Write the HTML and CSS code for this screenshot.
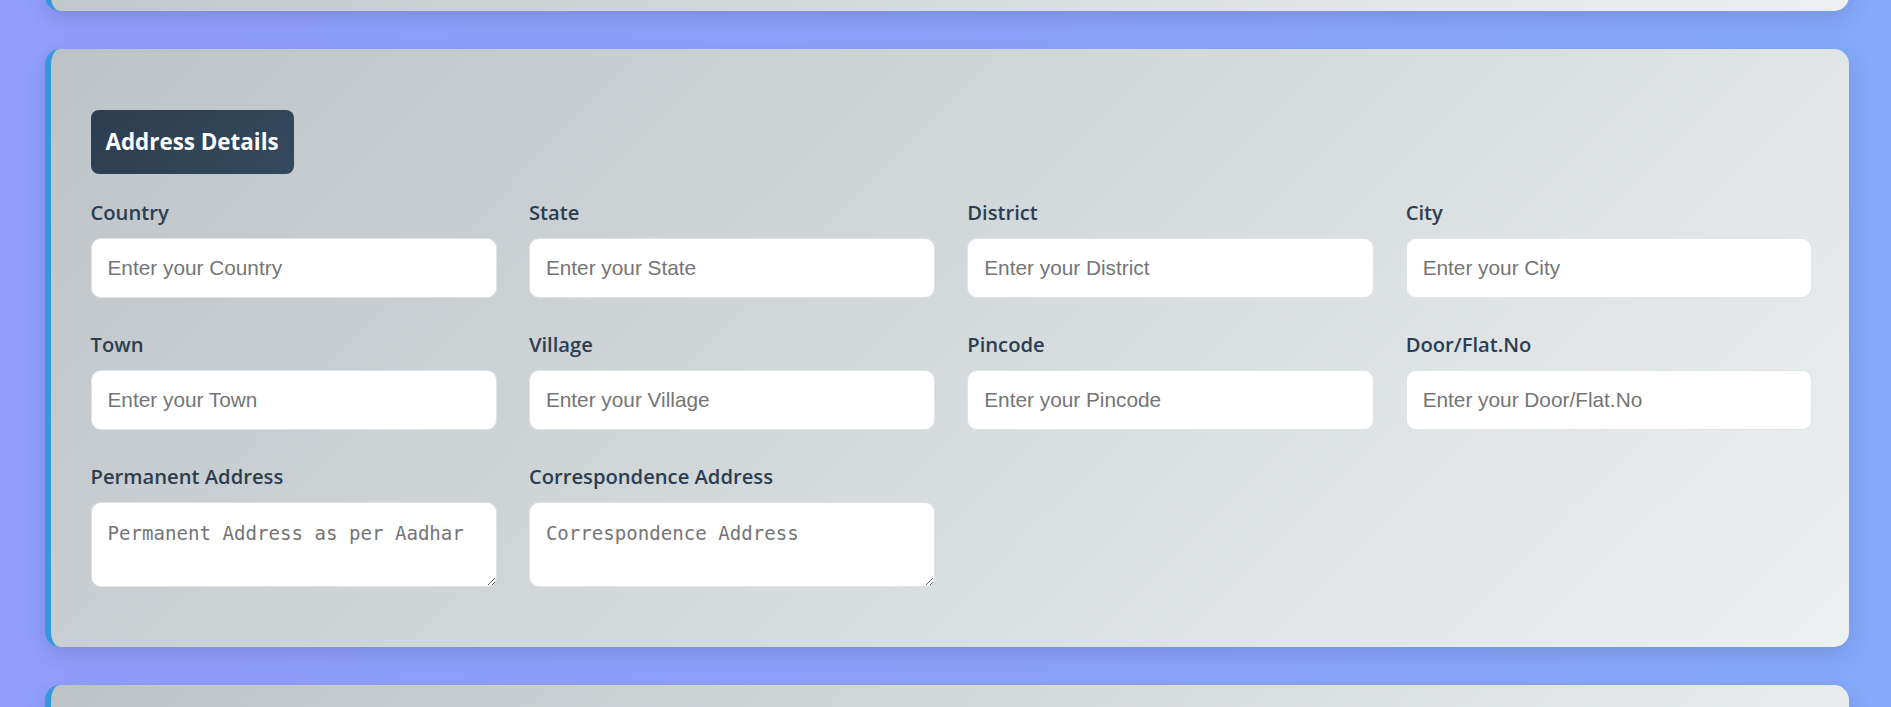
FILE: index.html
```html
<!DOCTYPE html>
<html lang="en">
<head>
<meta charset="utf-8">
<title>Address Details</title>
<link rel="stylesheet" href="styles.css">
</head>
<body>
<div class="page">
  <section class="card card--stub"></section>

  <section class="card">
    <h2 class="badge">Address Details</h2>
    <div class="grid">
      <div class="field">
        <label class="label" for="country">Country</label>
        <input class="input" id="country" type="text" placeholder="Enter your Country">
      </div>
      <div class="field">
        <label class="label" for="state">State</label>
        <input class="input" id="state" type="text" placeholder="Enter your State">
      </div>
      <div class="field">
        <label class="label" for="district">District</label>
        <input class="input" id="district" type="text" placeholder="Enter your District">
      </div>
      <div class="field">
        <label class="label" for="city">City</label>
        <input class="input" id="city" type="text" placeholder="Enter your City">
      </div>
      <div class="field">
        <label class="label" for="town">Town</label>
        <input class="input" id="town" type="text" placeholder="Enter your Town">
      </div>
      <div class="field">
        <label class="label" for="village">Village</label>
        <input class="input" id="village" type="text" placeholder="Enter your Village">
      </div>
      <div class="field">
        <label class="label" for="pincode">Pincode</label>
        <input class="input" id="pincode" type="text" placeholder="Enter your Pincode">
      </div>
      <div class="field">
        <label class="label" for="door">Door/Flat.No</label>
        <input class="input" id="door" type="text" placeholder="Enter your Door/Flat.No">
      </div>
      <div class="field">
        <label class="label" for="perm">Permanent Address</label>
        <textarea class="textarea" id="perm" placeholder="Permanent Address as per Aadhar"></textarea>
      </div>
      <div class="field">
        <label class="label" for="corr">Correspondence Address</label>
        <textarea class="textarea" id="corr" placeholder="Correspondence Address"></textarea>
      </div>
    </div>
  </section>

  <section class="card card--stub"></section>
</div>
</body>
</html>
```

FILE: styles.css
```css
html, body {
  margin: 0;
  padding: 0;
}

body {
  height: 707px;
  overflow: hidden;
  background: linear-gradient(90deg, #939ffd 0%, #8ea3fc 50%, #86abfa 100%);
  font-family: "Open Sans", "Noto Sans", sans-serif;
}

.page {
  display: flex;
  flex-direction: column;
  gap: 38px;
  padding: 0 42px 0 45px;
  margin-top: -189px;
}

.card {
  background: linear-gradient(135deg, #bdc3c7 0%, #ecf0f1 100%);
  border-left: 6px solid #3498db;
  border-radius: 15px;
  box-shadow: 0 8px 25px rgba(30, 40, 90, 0.18);
  padding: 61px 37px 60px 39.5px;
}

.card--stub {
  height: 200px;
  padding: 0;
  flex: none;
  box-sizing: border-box;
}

.badge {
  display: inline-block;
  margin: 0 0 24px;
  padding: 0 15px;
  height: 64px;
  line-height: 64px;
  border-radius: 8px;
  background: linear-gradient(135deg, #2c3e50, #34495e);
  color: #ffffff;
  font-size: 22.4px;
  font-weight: 700;
}

.grid {
  display: grid;
  grid-template-columns: repeat(4, 1fr);
  column-gap: 32px;
  row-gap: 32px;
}

.field {
  display: flex;
  flex-direction: column;
}

.label {
  display: block;
  font-size: 20.2px;
  font-weight: 600;
  line-height: 29px;
  color: #2c3e50;
  margin-bottom: 11px;
}

.input,
.textarea {
  box-sizing: border-box;
  width: 100%;
  border: 1px solid #e1e4e6;
  border-radius: 10px;
  background: #ffffff;
  color: #2c3e50;
  outline: none;
  margin: 0;
}

.input {
  height: 60px;
  padding: 0 16px;
  font-family: "Liberation Sans", Arial, sans-serif;
  font-size: 20.8px;
}

.textarea {
  display: block;
  height: 85px;
  padding: 19px 16px;
  font-family: "DejaVu Sans Mono", "Liberation Mono", monospace;
  font-size: 19.1px;
}

.input::placeholder,
.textarea::placeholder {
  color: #757575;
}
```
